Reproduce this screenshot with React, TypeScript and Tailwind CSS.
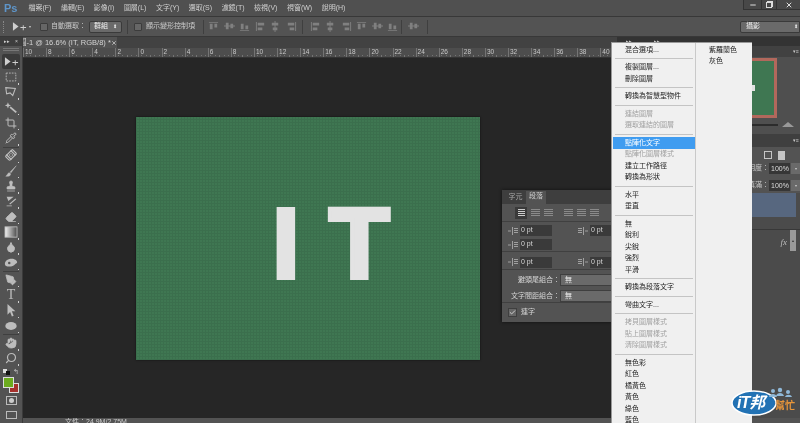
import { ReactNode } from 'react';
import { Crop, Pipette, Bandage, Stamp, Eraser, Droplet, PenTool, Hand, Search, Check, Minus, X } from 'lucide-react';

const menus = ['檔案(F)', '編輯(E)', '影像(I)', '圖層(L)', '文字(Y)', '選取(S)', '濾鏡(T)', '檢視(V)', '視窗(W)', '說明(H)'];

const rulerLabels = [10, 8, 6, 4, 2, 0, 2, 4, 6, 8, 10, 12, 14, 16, 18, 20, 22, 24, 26, 28, 30, 32, 34, 36, 38, 40];

type MenuEntry = { label: string; dim?: boolean; active?: boolean } | 'sep';

const contextMenu: MenuEntry[] = [
  { label: '混合選項...' },
  'sep',
  { label: '複製圖層...' },
  { label: '刪除圖層' },
  'sep',
  { label: '轉換為智慧型物件' },
  'sep',
  { label: '連結圖層', dim: true },
  { label: '選取連結的圖層', dim: true },
  'sep',
  { label: '點陣化文字', active: true },
  { label: '點陣化圖層樣式', dim: true },
  { label: '建立工作路徑' },
  { label: '轉換為形狀' },
  'sep',
  { label: '水平' },
  { label: '垂直' },
  'sep',
  { label: '無' },
  { label: '銳利' },
  { label: '尖銳' },
  { label: '強烈' },
  { label: '平滑' },
  'sep',
  { label: '轉換為段落文字' },
  'sep',
  { label: '彎曲文字...' },
  'sep',
  { label: '拷貝圖層樣式', dim: true },
  { label: '貼上圖層樣式', dim: true },
  { label: '清除圖層樣式', dim: true },
  'sep',
  { label: '無色彩' },
  { label: '紅色' },
  { label: '橘黃色' },
  { label: '黃色' },
  { label: '綠色' },
  { label: '藍色' },
];

const ic = 'w-[12px] h-[12px] text-[#bdbdbd]';

function Svg({ children }: { children: ReactNode }) {
  return (
    <svg viewBox="0 0 16 16" className="w-[14px] h-[14px] text-[#bdbdbd]" fill="currentColor">
      {children}
    </svg>
  );
}

const MoveGlyph = (
  <svg viewBox="0 0 16 10" className="w-[15px] h-[10px] text-[#cfcfcf]" fill="currentColor">
    <path d="M1 0l6 4.5-6 4.5z" />
    <path d="M11.5 3v2H9v1h2.5v2.5h1V6H15V5h-2.5V3z" />
  </svg>
);

const tools: (ReactNode | 'sep')[] = [
  MoveGlyph,
  <Svg><rect x="2.5" y="3.5" width="11" height="9" fill="none" stroke="currentColor" strokeDasharray="2 1.2" /></Svg>,
  <Svg><path d="M2 3l11 1-3 8-3-3-4 1z" fill="none" stroke="currentColor" strokeWidth="1.2" /></Svg>,
  <Svg><path d="M7 7l7 6" stroke="currentColor" strokeWidth="2.2" /><path d="M4.5 1.5l1 2.5 2.5 1-2.5 1-1 2.5-1-2.5L1 5l2.5-1z" /></Svg>,
  <Crop className={ic} strokeWidth={2} />,
  <Pipette className={ic} strokeWidth={2} />,
  'sep',
  <Bandage className={`${ic} -rotate-[45deg]`} strokeWidth={2.4} />,
  <Svg><path d="M14 2L7 9l1 1zM6 10c-2 0-2 3-4 4 3 .5 6-.5 5.500-3z" stroke="currentColor" strokeWidth=".5" /></Svg>,
  <Stamp className={ic} fill="currentColor" strokeWidth={1.5} />,
  <Svg><path d="M3 3h8l-6 5zM13 5L6 11l1 1 7-6zM3 13h6v1H3z" /></Svg>,
  <Eraser className={ic} fill="currentColor" strokeWidth={1.5} />,
  <svg viewBox="0 0 16 14" className="w-[14px] h-[12px]">
    <defs>
      <linearGradient id="grad" x1="0" x2="1" y1="0" y2="0">
        <stop offset="0" stopColor="#f2f2f2" />
        <stop offset="1" stopColor="#4a4a4a" />
      </linearGradient>
    </defs>
    <rect x="1" y="1" width="14" height="12" fill="url(#grad)" stroke="#bdbdbd" />
  </svg>,
  <Droplet className={ic} fill="currentColor" />,
  <Svg><path d="M1 9c0-4 4-6 8-6 3 0 6 2 6 4 0 1-1 1-2 2-2 2-4 3-7 3-3 0-5-1-5-3z" /><circle cx="6" cy="8" r="1.400" fill="#555" /></Svg>,
  'sep',
  <PenTool className={ic} fill="currentColor" strokeWidth={1.5} />,
  <span className="[font-family:'Liberation_Serif',serif] text-[14px] leading-none text-[#bdbdbd]">T</span>,
  <Svg><path d="M4 1l9 8.500H9l2 5-2 .8-2-5-3 3z" /></Svg>,
  <Svg><ellipse cx="8" cy="8" rx="6.500" ry="4.500" /></Svg>,
  'sep',
  <Hand className={ic} fill="currentColor" strokeWidth={1.5} />,
  <Search className={`${ic} -scale-x-100`} strokeWidth={2.4} />,
];

function ToolBar() {
  return (
    <div className="w-[23px] shrink-0 bg-[#535353] border-r border-[#3a3a3a] flex flex-col">
      <div className="h-[9px] shrink-0 bg-[#3d3d3d] flex items-center justify-center gap-[5px] text-[5px] text-[#cfcfcf]">
        <span>▸▸</span>
        <span>×</span>
      </div>
      <div className="mx-[3px] mt-[2px] mb-[3px] h-[3px] shrink-0 border-y border-[#777]" />
      {tools.map((t, i) =>
        t === 'sep' ? (
          <div key={i} className="mx-[3px] h-[2px] shrink-0 border-b border-[#3f3f3f]" />
        ) : (
          <div
            key={i}
            className={`relative mx-[2px] h-[15.3px] shrink-0 flex items-center justify-center ${
              i === 0 ? 'bg-[#3a3a3a] rounded-[2px]' : ''
            }`}
          >
            {t}
            <span className="absolute right-[1px] bottom-0 w-[1.500px] h-[1.500px] bg-[#d0d0d0]" />
          </div>
        ),
      )}
      <div className="mt-[1px] flex h-[10px] shrink-0 items-center justify-between px-[3px]">
        <span className="flex">
          <span className="w-[4px] h-[4px] bg-[#ddd]" />
          <span className="w-[4px] h-[4px] bg-[#111] -ml-[1px] mt-[2px]" />
        </span>
        <span className="text-[7px] leading-none text-[#ccc]">↰</span>
      </div>
      <div className="relative h-[17px] shrink-0 mx-[3px]">
        <span className="absolute left-[6px] top-[6px] w-[10px] h-[10px] bg-[#a5302c] border border-[#ddd]" />
        <span className="absolute left-0 top-0 w-[11px] h-[11px] bg-[#6cab1e] border border-[#ddd]" />
      </div>
      <div className="mt-[2px] shrink-0 flex justify-center">
        <span className="w-[11px] h-[9px] border border-[#bbb] flex items-center justify-center">
          <span className="w-[5px] h-[5px] rounded-full bg-[#ccc]" />
        </span>
      </div>
      <div className="mt-[6px] shrink-0 flex justify-center">
        <span className="w-[11px] h-[8px] border border-[#bbb]" />
      </div>
    </div>
  );
}

function AlignIcon({ kind }: { kind: number }) {
  const paths = [
    'M1 1h10v1H1zM2 3h3v6H2zM7 3h3v4H7z',
    'M0 5h12v1H0zM2 2h3v7H2zM7 3h3v5H7z',
    'M1 10h10v1H1zM2 3h3v6H2zM7 5h3v4H7z',
    'M1 1h1v10H1zM3 2h7v3H3zM3 7h5v3H3z',
    'M5 0h1v12H5zM2 2h7v3H2zM3 7h5v3H3z',
    'M10 1h1v10h-1zM2 2h7v3H2zM4 7h5v3H4z',
  ];
  return (
    <svg viewBox="0 0 12 12" className="w-[11px] h-[11px] text-[#808080]" fill="currentColor">
      <path d={paths[kind % 6]} />
    </svg>
  );
}

function OptionsBar() {
  return (
    <div className="h-[21px] shrink-0 bg-[#535353] border-y border-[#383838] flex items-center text-[7px] text-[#c9c9c9]">
      <div className="ml-[3px] w-[2px] h-[12px] border-l border-dotted border-[#888]" />
      <div className="ml-[7px] w-[16px]">{MoveGlyph}</div>
      <span className="ml-[1px] text-[4px]">▾</span>
      <span className="ml-[9px] w-[8px] h-[8px] bg-[#666] border border-[#3c3c3c] rounded-[1px]" />
      <span className="ml-[3px] w-[33px] whitespace-nowrap">自動選取：</span>
      <div className="ml-[5px] w-[33px] h-[12px] bg-[#6a6a6a] border border-[#3a3a3a] rounded-[2px] flex items-center justify-between px-[4px] text-[#eee]">
        <span>群組</span>
        <span className="text-[5px]">⬍</span>
      </div>
      <div className="ml-[5px] w-px h-[14px] bg-[#3f3f3f]" />
      <span className="ml-[6px] w-[8px] h-[8px] bg-[#666] border border-[#3c3c3c] rounded-[1px]" />
      <span className="ml-[4px] w-[50px] whitespace-nowrap">顯示變形控制項</span>
      <div className="ml-[7px] w-px h-[14px] bg-[#3f3f3f]" />
      <div className="ml-[4px] w-[93px] flex justify-between pr-[4px]">
        {[0, 1, 2, 3, 4, 5].map((k) => (
          <AlignIcon key={k} kind={k} />
        ))}
      </div>
      <div className="ml-[1px] w-px h-[14px] bg-[#3f3f3f]" />
      <div className="ml-[7px] w-[88px] flex justify-between">
        {[3, 4, 5, 0, 1, 2].map((k) => (
          <AlignIcon key={k} kind={k} />
        ))}
      </div>
      <div className="ml-[3px] w-px h-[14px] bg-[#3f3f3f]" />
      <span className="ml-[6px]">
        <AlignIcon kind={1} />
      </span>
      <div className="ml-[8px] w-px h-[14px] bg-[#3f3f3f]" />
      <div className="ml-auto w-[60px] h-[12px] bg-[#6a6a6a] border border-[#3a3a3a] rounded-l-[2px] flex items-center justify-between pl-[5px] pr-[1px] text-[#eee]">
        <span>攝影</span>
        <span className="text-[5px]">⬍</span>
      </div>
    </div>
  );
}

function Ruler() {
  return (
    <div className="h-[10px] shrink-0 bg-[#4d4d4d] border-b border-[#333] flex overflow-hidden text-[6.500px] leading-none text-[#c8c8c8]">
      {rulerLabels.map((n, i) => (
        <div key={i} className="relative w-[23.100px] shrink-0 border-l border-[#747474] pl-[1px] pt-[1px]">
          {n}
          <div className="absolute left-0 right-0 bottom-0 flex justify-around">
            <span className="w-px h-[1px] bg-[#747474]" />
            <span className="w-px h-[1px] bg-[#747474]" />
            <span className="w-px h-[2px] bg-[#747474]" />
            <span className="w-px h-[1px] bg-[#747474]" />
            <span className="w-px h-[1px] bg-[#747474]" />
          </div>
        </div>
      ))}
    </div>
  );
}

function PtField({ wide, flip }: { wide?: boolean; flip?: boolean }) {
  return (
    <div className="flex items-center">
      <svg viewBox="0 0 10 10" className={`w-[10px] h-[10px] mr-[2px] text-[#a0a0a0] ${flip ? '-scale-x-100' : ''}`} fill="currentColor">
        <path d="M4 1h1v8H4zM6 2h4v1H6zM6 4h4v1H6zM6 6h4v1H6zM0 4.500h3v1H0z" />
      </svg>
      <div className={`h-[11px] bg-[#3a3a3a] flex items-center pl-[1px] text-[7px] text-[#d6d6d6] ${wide ? 'w-[32px]' : 'w-[24px]'}`}>
        0 pt
      </div>
    </div>
  );
}

function ParagraphPanel() {
  return (
    <div className="absolute left-[479px] top-[132px] w-[112px] h-[132px] bg-[#535353] shadow-[0_0_3px_#111] flex flex-col text-[7px] text-[#d4d4d4]">
      <div className="h-[14px] shrink-0 bg-[#3e3e3e] flex items-end pl-[3px]">
        <span className="w-[21px] h-[12px] text-center text-[#a8a8a8]">字元</span>
        <span className="w-[20px] h-[13px] bg-[#535353] text-center text-[#d0d0d0]">段落</span>
      </div>
      <div className="h-[18px] shrink-0 border-b border-[#404040] flex items-center pl-[13px] gap-[4px]">
        <span className="w-[12px] h-[12px] bg-[#3a3a3a] flex items-center justify-center">
          <span className="w-[7px] h-[7px] bg-[repeating-linear-gradient(#ccc_0_1px,#3a3a3a_1px_2px)]" />
        </span>
        {[0, 1, 2, 3, 4].map((k) => (
          <span key={k} className={`w-[9px] h-[7px] bg-[repeating-linear-gradient(#8a8a8a_0_1px,#535353_1px_2px)] ${k === 1 ? 'mr-[7px]' : ''}`} />
        ))}
      </div>
      <div className="h-[30px] shrink-0 border-b border-[#404040] pl-[6px] pt-[3px] flex flex-col gap-[3px]">
        <div className="flex justify-between">
          <PtField wide />
          <PtField flip />
        </div>
        <PtField wide />
      </div>
      <div className="h-[18px] shrink-0 border-b border-[#404040] pl-[6px] pt-[3px] flex justify-between">
        <PtField wide />
        <PtField flip />
      </div>
      <div className="h-[33px] shrink-0 border-b border-[#404040] pt-[4px] flex flex-col gap-[4px]">
        <div className="flex items-center justify-end">
          <span>避頭尾組合：</span>
          <span className="w-[54px] h-[12px] bg-[#6a6a6a] border border-[#3f3f3f] pl-[4px] text-[#eee]">無</span>
        </div>
        <div className="flex items-center justify-end">
          <span>文字間距組合：</span>
          <span className="w-[54px] h-[12px] bg-[#6a6a6a] border border-[#3f3f3f] pl-[4px] text-[#eee]">無</span>
        </div>
      </div>
      <div className="flex items-center pl-[6px] pt-[4px] gap-[4px]">
        <span className="w-[9px] h-[9px] bg-[#666] border border-[#3f3f3f] flex items-center justify-center">
          <Check className="w-[9px] h-[9px] text-[#ddd]" strokeWidth={3} />
        </span>
        <span>連字</span>
      </div>
    </div>
  );
}

function ContextMenu() {
  return (
    <div className="absolute left-[611px] top-[42px] w-[141px] h-[381px] bg-[#f0f0f0] border-l border-t border-[#999] flex text-[7px] text-[#222]">
      <div className="w-[84px] pt-[1px] pl-[1px] shrink-0 border-r border-[#c9c9c9] flex flex-col">
        {contextMenu.map((item, i) =>
          item === 'sep' ? (
            <div key={i} className="h-[6px] shrink-0 flex items-center px-[2px]">
              <div className="h-px w-full bg-[#c4c4c4]" />
            </div>
          ) : (
            <div
              key={i}
              className={`h-[11.500px] shrink-0 flex items-center pl-[12px] whitespace-nowrap ${
                item.active ? 'bg-[#3f9cf0] text-white' : item.dim ? 'text-[#a0a0a0]' : ''
              }`}
            >
              {item.label}
            </div>
          ),
        )}
      </div>
      <div className="pl-[13px] pt-[1px] flex flex-col">
        <div className="h-[11.500px] flex items-center">紫羅蘭色</div>
        <div className="h-[11.500px] flex items-center">灰色</div>
      </div>
    </div>
  );
}

function Dock() {
  return (
    <div className="w-[183px] shrink-0 bg-[#4b4b4b] flex flex-col text-[7px] text-[#c9c9c9]">
      <div className="h-[9px] shrink-0 bg-[#333] flex items-center gap-[22px] pl-[9px] text-[5px]">
        <span>▸▸</span>
        <span>▸▸</span>
      </div>
      <div className="h-[11px] shrink-0 bg-[#414141] flex items-center justify-end pr-[1px] text-[5px]">▾≡</div>
      <div className="h-[77px] shrink-0 bg-[#4f4f4f] pt-[1px] pl-[60px] flex flex-col">
        <div className="w-[100px] h-[60px] shrink-0 bg-[#3f7752] border-[3px] border-[#b2685c] flex items-center pl-[72px]">
          <span className="w-[3px] h-[6px] bg-[#e3e3e3]" />
        </div>
        <div className="mt-[4px] flex items-center justify-end pr-[6px] gap-[4px]">
          <span className="w-[60px] h-[2px] bg-[#2c2c2c]" />
          <span className="w-0 h-0 border-x-[6px] border-x-transparent border-b-[5px] border-b-[#999]" />
        </div>
      </div>
      <div className="h-[13px] shrink-0 bg-[#3f3f3f] flex items-center justify-end pr-[1px] text-[5px]">▾≡</div>
      <div className="h-[16px] shrink-0 bg-[#535353] flex items-center justify-end pr-[15px] gap-[6px]">
        <span className="w-[8px] h-[8px] border border-[#c6c6c6]" />
        <span className="w-[7px] h-[9px] bg-[#c6c6c6]" />
      </div>
      <div className="h-[30px] shrink-0 bg-[#535353] flex flex-col items-end gap-[6px]">
        {['不透明度：', '填滿：'].map((l) => (
          <div key={l} className="flex items-center whitespace-nowrap">
            <span>{l}</span>
            <span className="w-[21px] h-[11px] bg-[#363636] pl-[2px] text-[#ddd] leading-[11px]">100%</span>
            <span className="w-[9px] h-[11px] bg-[#6a6a6a] ml-px flex items-center justify-center text-[4px]">▾</span>
          </div>
        ))}
      </div>
      <div className="h-[37px] shrink-0 flex flex-col border-b border-[#383838]">
        <div className="h-[24px] mr-[4px] bg-[#57677f]" />
      </div>
      <div className="flex-1 relative flex justify-end pr-[4px] pt-[4px]">
        <span className="[font-family:'Liberation_Serif',serif] italic text-[9px] text-[#bdbdbd] mr-[9px] mt-[2px]">fx</span>
        <span className="absolute right-[4px] top-0 w-[6px] h-[21px] bg-[#9a9a9a] flex items-center justify-center text-[4px] text-[#333]">▴</span>
      </div>
      <div className="h-[5px] shrink-0 bg-[#535353]" />
    </div>
  );
}

function Logo() {
  return (
    <div className="absolute left-[730px] top-[387px] w-[66px] h-[30px]">
      <svg viewBox="0 0 66 30" className="absolute inset-0 w-full h-full">
        <ellipse cx="24" cy="16" rx="22" ry="12" fill="#2272b4" stroke="#fff" strokeWidth="1.500" />
        <g fill="#8fb8d8">
          <circle cx="43" cy="4" r="2" />
          <circle cx="50" cy="3" r="2.200" />
          <circle cx="58" cy="5" r="2" />
          <path d="M39 10c1-4 7-4 8 0zM46 9c1-4 7-4 8 0zM55 10c1-3 6-3 7 0z" />
        </g>
      </svg>
      <span className="absolute left-[7px] top-[5px] italic font-bold text-[16px] leading-[22px] text-white tracking-[-1px]">
        iT邦
      </span>
      <span className="absolute left-[45px] top-[12px] font-bold text-[10px] leading-[14px] text-[#e8963a]">幫忙</span>
    </div>
  );
}

export default function App() {
  return (
    <div className="relative w-[800px] h-[423px] overflow-hidden flex flex-col bg-[#262626] blur-[0.3px] [font-family:'Liberation_Sans','Noto_Sans_CJK_TC',sans-serif]">
      <div className="h-[16px] shrink-0 bg-[#505050] flex items-start text-[7px] text-[#cfcfcf]">
        <span className="ml-[4px] mr-[11px] font-bold text-[11px] leading-[16px] text-[#5e95c9]">Ps</span>
        <div className="flex h-full items-center gap-[9.500px]">
          {menus.map((m) => (
            <span key={m} className="whitespace-nowrap">{m}</span>
          ))}
        </div>
        <div className="ml-auto flex h-[10px] bg-[#484848] border-b border-l border-[#333] text-[#ddd]">
          <span className="w-[18px] flex items-center justify-center border-r border-[#333]"><Minus className="w-[8px] h-[8px]" strokeWidth={3} /></span>
          <span className="w-[15px] flex items-center justify-center border-r border-[#333]">
            <span className="w-[6px] h-[6px] border border-[#ddd] shadow-[1px_-1px_0_#ddd]" />
          </span>
          <span className="w-[23px] flex items-center justify-center"><X className="w-[8px] h-[8px]" strokeWidth={3} /></span>
        </div>
      </div>
      <OptionsBar />
      <div className="flex-1 min-h-0 flex">
        <ToolBar />
        <div className="flex-1 min-w-0 flex flex-col">
          <div className="h-[11px] shrink-0 bg-[#424242] flex items-stretch">
            <div className="w-[94px] bg-[#535353] overflow-hidden flex items-center justify-between pr-[2px] text-[7.500px] text-[#d4d4d4] whitespace-nowrap">
              <span className="-ml-[4px]">圖-1 @ 16.6% (IT, RGB/8) *</span>
              <X className="w-[6px] h-[6px] shrink-0 text-[#ccc]" strokeWidth={3} />
            </div>
          </div>
          <Ruler />
          <div className="relative flex-1 min-h-0 overflow-hidden pl-[113px] pt-[59px]">
            <div className="w-[344px] h-[243px] bg-[#3f7752] [background-image:repeating-linear-gradient(0deg,#3b6f4d_0_1px,transparent_1px_3px),repeating-linear-gradient(90deg,#3b6f4d_0_1px,transparent_1px_3px)] shadow-[0_0_2px_#111] pt-[75.500px] pl-[136px]">
              <span className="block [font-family:'Liberation_Sans',sans-serif] font-bold text-[100px] leading-none tracking-[29px] [-webkit-text-stroke:4px_#e3e3e3] text-[#e3e3e3] whitespace-nowrap">IT</span>
            </div>
            <ParagraphPanel />
          </div>
          <div className="h-[5px] shrink-0 bg-[#535353] flex items-start overflow-hidden text-[7px] leading-[7px] text-[#ccc]">
            <span className="ml-[42px] whitespace-nowrap">文件：24.9M/2.75M</span>
          </div>
        </div>
        <Dock />
      </div>
      <ContextMenu />
      <Logo />
    </div>
  );
}
